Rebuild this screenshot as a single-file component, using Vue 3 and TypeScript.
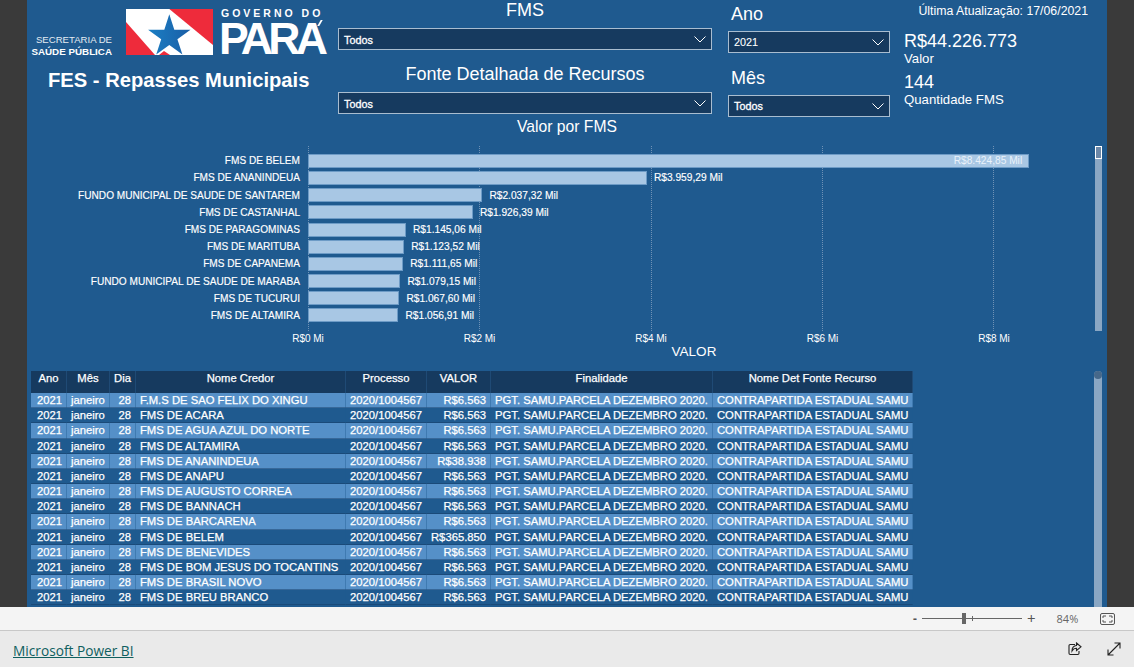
<script setup lang="ts">
interface Bar { name: string; value: number; label: string; inside?: boolean }
const scale = 85.6
const bars: Bar[] = [
  { name: 'FMS DE BELEM', value: 8424.85, label: 'R$8.424,85 Mil', inside: true },
  { name: 'FMS DE ANANINDEUA', value: 3959.29, label: 'R$3.959,29 Mil' },
  { name: 'FUNDO MUNICIPAL DE SAUDE DE SANTAREM', value: 2037.32, label: 'R$2.037,32 Mil' },
  { name: 'FMS DE CASTANHAL', value: 1926.39, label: 'R$1.926,39 Mil' },
  { name: 'FMS DE PARAGOMINAS', value: 1145.06, label: 'R$1.145,06 Mil' },
  { name: 'FMS DE MARITUBA', value: 1123.52, label: 'R$1.123,52 Mil' },
  { name: 'FMS DE CAPANEMA', value: 1111.65, label: 'R$1.111,65 Mil' },
  { name: 'FUNDO MUNICIPAL DE SAUDE DE MARABA', value: 1079.15, label: 'R$1.079,15 Mil' },
  { name: 'FMS DE TUCURUI', value: 1067.6, label: 'R$1.067,60 Mil' },
  { name: 'FMS DE ALTAMIRA', value: 1056.91, label: 'R$1.056,91 Mil' },
]
const ticks = ['R$0 Mi', 'R$2 Mi', 'R$4 Mi', 'R$6 Mi', 'R$8 Mi']
const barWidth = (v: number) => `${(v / 1000) * scale}px`
const rows: [string, string][] = [
  ['F.M.S DE SAO FELIX DO XINGU', 'R$6.563'],
  ['FMS DE ACARA', 'R$6.563'],
  ['FMS DE AGUA AZUL DO NORTE', 'R$6.563'],
  ['FMS DE ALTAMIRA', 'R$6.563'],
  ['FMS DE ANANINDEUA', 'R$38.938'],
  ['FMS DE ANAPU', 'R$6.563'],
  ['FMS DE AUGUSTO CORREA', 'R$6.563'],
  ['FMS DE BANNACH', 'R$6.563'],
  ['FMS DE BARCARENA', 'R$6.563'],
  ['FMS DE BELEM', 'R$365.850'],
  ['FMS DE BENEVIDES', 'R$6.563'],
  ['FMS DE BOM JESUS DO TOCANTINS', 'R$6.563'],
  ['FMS DE BRASIL NOVO', 'R$6.563'],
  ['FMS DE BREU BRANCO', 'R$6.563'],
]
</script>

<template>
  <div class="page">
    <div class="stage">
      <main class="canvas">
        <header class="top">
          <div class="brand">
            <div class="logos">
              <div class="secretaria">
                <span>SECRETARIA DE</span>
                <strong>SAÚDE PÚBLICA</strong>
              </div>
              <svg class="flag" viewBox="0 0 87 46" aria-hidden="true">
                <defs>
                  <linearGradient id="star" x1="0" x2="1" y1="0" y2="0">
                    <stop offset="0" stop-color="#1b7fc4" />
                    <stop offset="1" stop-color="#1a5ea6" />
                  </linearGradient>
                </defs>
                <rect width="87" height="46" fill="#fff" />
                <polygon points="0,13 0,46 29,46" fill="#ee2b3b" />
                <polygon points="43.300,0 87,0 87,36" fill="#ee2b3b" />
                <polygon points="33,46 38,42 44,46" fill="#ee2b3b" />
                <polygon points="43.300,5.300 48.300,20.700 64.500,20.700 51.400,30.200 56.400,45.600 43.300,36.100 30.200,45.600 35.200,30.200 22.100,20.700 38.300,20.700" fill="url(#star)" />
              </svg>
              <div class="gov">
                <span class="gov-top">GOVERNO DO</span>
                <span class="gov-name">PARA</span>
              </div>
            </div>
            <h1>FES - Repasses Municipais</h1>
          </div>
          <div class="slicers-wide">
            <div class="slicer">
              <div class="slicer-title center">FMS</div>
              <div class="select"><span>Todos</span><svg viewBox="0 0 12 7"><path d="M.5.5 6 6 11.500.5" /></svg></div>
            </div>
            <div class="slicer">
              <div class="slicer-title center">Fonte Detalhada de Recursos</div>
              <div class="select"><span>Todos</span><svg viewBox="0 0 12 7"><path d="M.5.5 6 6 11.500.5" /></svg></div>
            </div>
          </div>
          <div class="slicers-narrow">
            <div class="slicer">
              <div class="slicer-title">Ano</div>
              <div class="select"><span class="plain">2021</span><svg viewBox="0 0 12 7"><path d="M.5.5 6 6 11.500.5" /></svg></div>
            </div>
            <div class="slicer">
              <div class="slicer-title">Mês</div>
              <div class="select"><span>Todos</span><svg viewBox="0 0 12 7"><path d="M.5.5 6 6 11.500.5" /></svg></div>
            </div>
          </div>
          <div class="kpis">
            <div class="updated">Última Atualização: 17/06/2021</div>
            <div class="kpi-value first">R$44.226.773</div>
            <div class="kpi-label">Valor</div>
            <div class="kpi-value second">144</div>
            <div class="kpi-label">Quantidade FMS</div>
          </div>
        </header>

        <section class="chart">
          <h2>Valor por FMS</h2>
          <div class="plot">
            <div class="gridlines"><i v-for="t in ticks" :key="t"></i></div>
            <div v-for="b in bars" :key="b.name" class="bar-row">
              <span class="bar-name">{{ b.name }}</span>
              <div class="bar" :style="{ width: barWidth(b.value) }">
                <span v-if="b.inside" class="bar-in">{{ b.label }}</span>
              </div>
              <span v-if="!b.inside" class="bar-out">{{ b.label }}</span>
            </div>
            <div class="scroll-chart"><i></i></div>
          </div>
          <div class="axis"><span v-for="t in ticks" :key="t">{{ t }}</span></div>
          <div class="axis-title">VALOR</div>
        </section>

        <section class="table-wrap">
          <div class="table">
            <div class="thead">
              <span>Ano</span><span>Mês</span><span>Dia</span><span>Nome Credor</span><span>Processo</span><span>VALOR</span><span>Finalidade</span><span>Nome Det Fonte Recurso</span>
            </div>
            <div v-for="(r, i) in rows" :key="r[0]" class="trow" :class="{ alt: i % 2 === 0 }">
              <span class="r">2021</span><span>janeiro</span><span class="r">28</span><span>{{ r[0] }}</span><span>2020/1004567</span><span class="r">{{ r[1] }}</span><span>PGT. SAMU.PARCELA DEZEMBRO 2020.</span><span>CONTRAPARTIDA ESTADUAL SAMU</span>
            </div>
          </div>
          <div class="scroll-table"><i></i></div>
        </section>
      </main>
    </div>

    <div class="zoombar">
      <span class="minus">-</span>
      <div class="slider"><i class="thumb"></i><i class="mid"></i></div>
      <span class="plus">+</span>
      <span class="pct">84%</span>
      <svg class="fit" viewBox="0 0 15 12"><rect x=".5" y=".5" width="14" height="11" rx="1.500" /><path d="M3 5V3h3M9 3h3v2M12 7v2H9M6 9H3V7" /></svg>
    </div>
    <footer class="footer">
      <a class="pbi">Microsoft Power BI</a>
      <div class="foot-icons">
        <svg viewBox="0 0 14 14"><path d="M7 2.500H2.200a1.200 1.200 0 0 0-1.200 1.200v7.600a1.200 1.200 0 0 0 1.200 1.200h7.600a1.200 1.200 0 0 0 1.200-1.200V9" /><path d="M8.500 1 13 4.800 8.500 8.500V6.300C6.500 6.300 5 7.200 4 9c0-3 1.500-5.200 4.500-5.500z" /></svg>
        <svg viewBox="0 0 14 14"><path d="M1 13 13 1M7.500 1H13v5.500M1 7.500V13h5.500" /></svg>
      </div>
    </footer>
  </div>
</template>

<style>
html, body { margin: 0; background: #3a3a3a; overflow: hidden; }
</style>

<style scoped>
.page { width: 1134px; height: 667px; display: flex; flex-direction: column; font-family: "Liberation Sans", Arial, sans-serif; color: #fff; }
.stage { height: 607px; background: #3a3a3a; padding: 0 27px; box-sizing: border-box; }
.canvas { height: 607px; background: #1f5a8f; display: flex; flex-direction: column; overflow: hidden; }

.top { height: 118px; display: flex; flex: none; }
.brand { width: 311px; flex: none; }
.logos { display: flex; align-items: flex-start; padding-top: 9px; height: 46px; }
.secretaria { width: 85px; flex: none; margin-top: 25px; font-size: 9.600px; line-height: 11.500px; text-align: right; display: flex; flex-direction: column; color: #e4ebf2; white-space: nowrap; }
.secretaria strong { font-size: 9.800px; color: #fff; }
.flag { width: 87px; height: 46px; margin-left: 14px; flex: none; }
.gov { margin-left: 8px; display: flex; flex-direction: column; }
.gov-top { font-size: 10.500px; font-weight: 700; letter-spacing: 3px; line-height: 9px; white-space: nowrap; }
.gov-name { position: relative; width: 105px; font-size: 44.600px; font-weight: 700; line-height: 33px; letter-spacing: -4.700px; margin: 4px 0 0 -2px; white-space: nowrap; }
.gov-name::after { content: ""; position: absolute; right: 3px; top: -2px; width: 2px; height: 6px; background: #fff; transform: skewX(-30deg); }
h1 { margin: 13px 0 0 21px; font-size: 20.200px; line-height: 24px; font-weight: 700; white-space: nowrap; }

.slicers-wide { width: 374px; flex: none; }
.slicers-narrow { width: 162px; margin-left: 16px; flex: none; padding-top: 3px; }
.slicer { height: 64px; }
.slicer-title { font-size: 18px; line-height: 20px; height: 28px; padding: 0 3px; box-sizing: border-box; }
.slicers-narrow .slicer-title { padding-top: 1px; }
.slicer-title.center { text-align: center; }
.select { height: 22px; box-sizing: border-box; background: #163a5f; border: 1.500px solid #a9bdd0; display: flex; align-items: center; justify-content: space-between; padding: 0 5px; font-size: 10.800px; -webkit-text-stroke: .3px #fff; }
.slicers-wide .select span { padding-top: 1px; }
.select .plain { -webkit-text-stroke: .1px #fff; }
.select svg { width: 12px; height: 7px; fill: none; stroke: #fff; stroke-width: 1; }

.kpis { flex: none; width: 203px; margin-left: 14px; font-size: 13.200px; }
.updated { text-align: right; line-height: 14px; padding: 4px 19px 0 0; font-size: 12.300px; white-space: nowrap; }
.kpi-value { font-size: 18px; line-height: 20px; }
.kpi-value.first { margin-top: 13px; }
.kpi-value.second { margin-top: 6px; }
.kpi-label { line-height: 14px; margin-top: 1px; }

.chart { height: 252px; flex: none; display: flex; flex-direction: column; }
h2 { margin: 0; font-size: 15.700px; line-height: 18px; font-weight: 400; text-align: center; height: 34.200px; flex: none; }
.plot { position: relative; height: 172px; flex: none; }
.gridlines { position: absolute; left: 281px; top: -6px; bottom: -7px; width: 686px; display: flex; justify-content: space-between; }
.gridlines i { border-left: 1px dotted #6f92b6; width: 0; }
.bar-row { position: relative; height: 17.200px; display: flex; align-items: center; font-size: 10.200px; -webkit-text-stroke: .15px #fff; }
.bar-name { width: 273px; text-align: right; flex: none; margin-right: 8px; white-space: nowrap; font-size: 10.100px; }
.bar { height: 14px; background: #a8c7e4; box-sizing: border-box; border: 1px solid #6d9bc6; flex: none; display: flex; align-items: center; justify-content: flex-end; }
.bar-in { padding-right: 6px; color: #eaf2fa; -webkit-text-stroke: 0; }
.bar-out { margin-left: 7px; white-space: nowrap; }
.scroll-chart { position: absolute; right: 5px; top: -6px; bottom: -7px; width: 7px; background: #8aa7c4; }
.scroll-chart i { display: block; height: 13px; background: #6c88a8; border: 1px solid #fff; box-sizing: border-box; }
.axis { margin: 7.300px 0 0 256px; width: 736px; display: flex; justify-content: space-between; font-size: 10px; height: 14px; align-items: center; }
.axis span { width: 50px; text-align: center; }
.axis-title { text-align: center; font-size: 13.500px; height: 14px; line-height: 14px; padding-left: 254px; }

.table-wrap { position: relative; flex: 1; padding: 1px 0 0 4px; min-height: 0; }
.table { width: 882px; font-size: 11.250px; -webkit-text-stroke: .25px #fff; }
.thead, .trow { display: grid; grid-template-columns: 36px 43px 26px 210px 81px 64px 222px 200px; }
.thead { height: 22px; background: #163a5f; line-height: 14px; text-align: center; }
.thead span { border-right: 1px solid #1f4a75; }
.trow { height: 15.180px; line-height: 15px; white-space: nowrap; box-shadow: inset 0 -1px 0 rgba(20, 55, 95, .45); }
.trow span { padding: 0 4px; overflow: hidden; box-sizing: border-box; border-right: 1px solid rgba(31, 90, 143, .4); }
.trow .r { text-align: right; }
.trow.alt { background: #5590c8; }
.scroll-table { position: absolute; right: 5px; top: 1px; bottom: 0; width: 8px; background: #8aa7c4; border-radius: 4px 4px 0 0; }
.scroll-table i { display: block; height: 8px; width: 8px; border-radius: 4px; background: #46688a; }

.zoombar { height: 23px; background: #f4f4f4; border-bottom: 1px solid #c8c8c8; display: flex; align-items: center; color: #555; font-family: "Open Sans", sans-serif; }
.minus { margin-left: 913px; width: 6px; font-weight: 700; font-size: 12px; }
.slider { margin-left: 3px; width: 100px; height: 1px; background: #666; position: relative; }
.thumb { position: absolute; left: 40px; top: -5px; width: 4px; height: 11px; background: #666; }
.mid { position: absolute; left: 50px; top: -2px; width: 1px; height: 5px; background: #666; }
.plus { margin-left: 5px; font-size: 15px; line-height: 15px; }
.pct { margin-left: 21px; font-size: 11px; color: #666; }
.fit { width: 15px; height: 12px; margin-left: 22px; fill: none; stroke: #555; stroke-width: 1; }
.footer { height: 36px; background: #eaeaea; display: flex; align-items: center; justify-content: space-between; padding: 2px 13px 0; box-sizing: border-box; color: #333; }
.pbi { font-family: "Open Sans", sans-serif; font-size: 13.700px; color: #0f5f5f; text-decoration: underline; }
.foot-icons { display: flex; gap: 25px; margin-top: -2px; }
.foot-icons svg { width: 14px; height: 14px; fill: none; stroke: #222; stroke-width: 1.100; }
</style>
